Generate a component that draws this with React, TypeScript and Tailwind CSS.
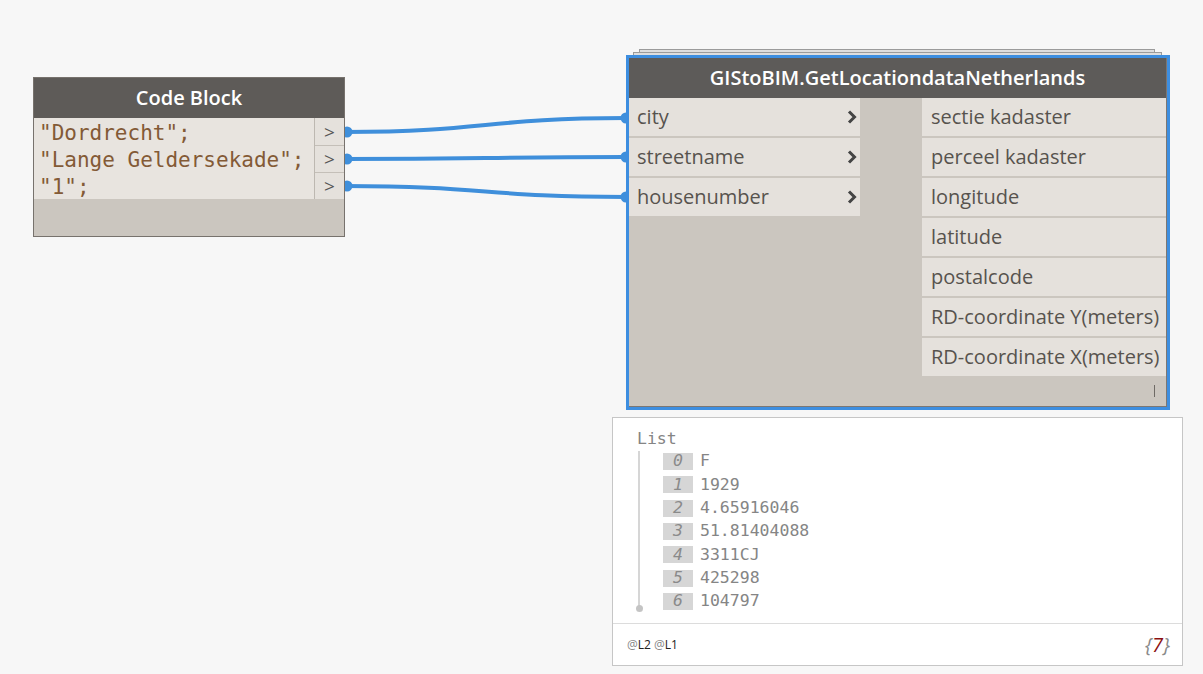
import React from "react";

const inputs = ["city", "streetname", "housenumber"];
const outputs = [
  "sectie kadaster",
  "perceel kadaster",
  "longitude",
  "latitude",
  "postalcode",
  "RD-coordinate Y(meters)",
  "RD-coordinate X(meters)",
];
const values = ["F", "1929", "4.65916046", "51.81404088", "3311CJ", "425298", "104797"];
const code = ['"Dordrecht";', '"Lange Geldersekade";', '"1";'];

const sans = "font-['Open_Sans','Noto_Sans',sans-serif]";
const mono = "font-['DejaVu_Sans_Mono','Liberation_Mono',monospace]";

const Chevron = () => (
  <svg width="10" height="14" viewBox="0 0 10 14" className="shrink-0">
    <polyline points="2,1.5 7.5,7 2,12.5" fill="none" stroke="#444" strokeWidth="3" />
  </svg>
);

const Wires = () => {
  const wires = [
    [132, 118],
    [159, 157],
    [186, 197],
  ];
  return (
    <svg className="absolute left-0 top-0" width="1203" height="674">
      {wires.map(([a, b], i) => (
        <g key={i}>
          <path
            d={`M345,${a} C485,${a} 486,${b} 626,${b}`}
            fill="none"
            stroke="#3f8fdb"
            strokeWidth="4"
          />
          <circle cx="347" cy={a} r="5.5" fill="#3f8fdb" />
          <circle cx="626" cy={b} r="5.5" fill="#3f8fdb" />
        </g>
      ))}
    </svg>
  );
};

const CodeBlock = () => (
  <div className="absolute left-[33px] top-[77px] flex h-[160px] w-[312px] flex-col border border-[#77726d] bg-[#cbc6bf]">
    <div className={`flex h-[40px] items-center justify-center bg-[#5e5b58] text-[20px] font-semibold text-white ${sans}`}>
      Code Block
    </div>
    <div className="flex">
      <div className={`flex-1 overflow-hidden bg-[#e8e4df] pl-[5px] text-[21px] text-[#835a36] ${mono}`}>
        {code.map((c) => (
          <div key={c} className="h-[27px] leading-[31px] whitespace-pre">
            {c}
          </div>
        ))}
      </div>
      <div className="w-[30px] border-l border-[#bdb8b1]">
        {code.map((c, i) => (
          <div
            key={c}
            className={`flex h-[27px] items-center justify-center bg-[#e5e1dc] pt-[1px] text-[19px] text-[#555] ${sans} ${i > 0 ? "border-t border-[#c4bfb8]" : ""}`}
          >
            &gt;
          </div>
        ))}
      </div>
    </div>
  </div>
);

const GetLocation = () => (
  <>
    <div className="absolute left-[639px] top-[49px] h-[20px] w-[516px] border border-[#9b9b9b] bg-[#dedede]" />
    <div className="absolute left-[633px] top-[52px] h-[20px] w-[529px] border border-[#9b9b9b] bg-[#dedede]" />
    <div className="absolute left-[626px] top-[55px] h-[355px] w-[544px] border-[3px] border-[#3d8ee0]">
      <div className="relative flex h-full flex-col border-r border-b border-[#7c7773] bg-[#cbc6bf]">
        <div className={`flex h-[40px] shrink-0 items-center justify-center bg-[#5d5b59] text-[20px] font-semibold text-white ${sans}`}>
          GIStoBIM.GetLocationdataNetherlands
        </div>
        <div className={`flex text-[20px] text-[#57534e] ${sans}`}>
          <div className="flex w-[231px] flex-col gap-[2px]">
            {inputs.map((p) => (
              <div key={p} className="flex h-[38px] items-center justify-between bg-[#e5e1dc] pl-[8px] pr-[3px]">
                <span>{p}</span>
                <Chevron />
              </div>
            ))}
          </div>
          <div className="ml-[62px] flex w-[244px] flex-col gap-[2px]">
            {outputs.map((p) => (
              <div key={p} className="flex h-[38px] items-center bg-[#e5e1dc] pl-[9px] whitespace-nowrap">
                {p}
              </div>
            ))}
          </div>
        </div>
        <div className="absolute right-[11px] bottom-[9px] h-[12px] w-px bg-[#6e6a65]" />
      </div>
    </div>
  </>
);

const Watch = () => (
  <div className="absolute left-[612px] top-[417px] flex h-[249px] w-[571px] flex-col border border-[#c6c6c6] bg-white">
    <div className={`h-[205px] pl-[24px] pt-[11px] text-[16.5px] text-[#858585] ${mono}`}>
      <div className="h-[21px] leading-[20px]">List</div>
      <div className="relative">
        <div className="absolute left-[1px] top-[1px] h-[156px] w-[2px] bg-[#d6d6d6]" />
        <div className="absolute left-[-1px] top-[155px] h-[7px] w-[7px] rounded-full bg-[#c4c4c4]" />
        {values.map((v, i) => (
          <div key={i} className="flex h-[23.33px] items-center pl-[26px]">
            <div className="flex h-[17px] w-[30px] items-center justify-center bg-[#d6d6d6] italic text-[#8a8a8a]">
              {i}
            </div>
            <div className="pl-[7px]">{v}</div>
          </div>
        ))}
      </div>
    </div>
    <div className={`flex flex-1 items-center justify-between border-t border-[#dcdcdc] pl-[14px] pr-[12px] ${sans}`}>
      <div className="text-[12px] text-[#222]">
        <span className="text-[#888]">@</span>L2 <span className="text-[#888]">@</span>L1
      </div>
      <div className="text-[20px] italic text-[#8a8a8a]">
        {"{"}
        <span className="text-[#8b1010]">7</span>
        {"}"}
      </div>
    </div>
  </div>
);

export default function App() {
  return (
    <div className="relative h-[674px] w-[1203px] overflow-hidden bg-[#f7f7f7]">
      <Wires />
      <CodeBlock />
      <GetLocation />
      <Watch />
    </div>
  );
}
